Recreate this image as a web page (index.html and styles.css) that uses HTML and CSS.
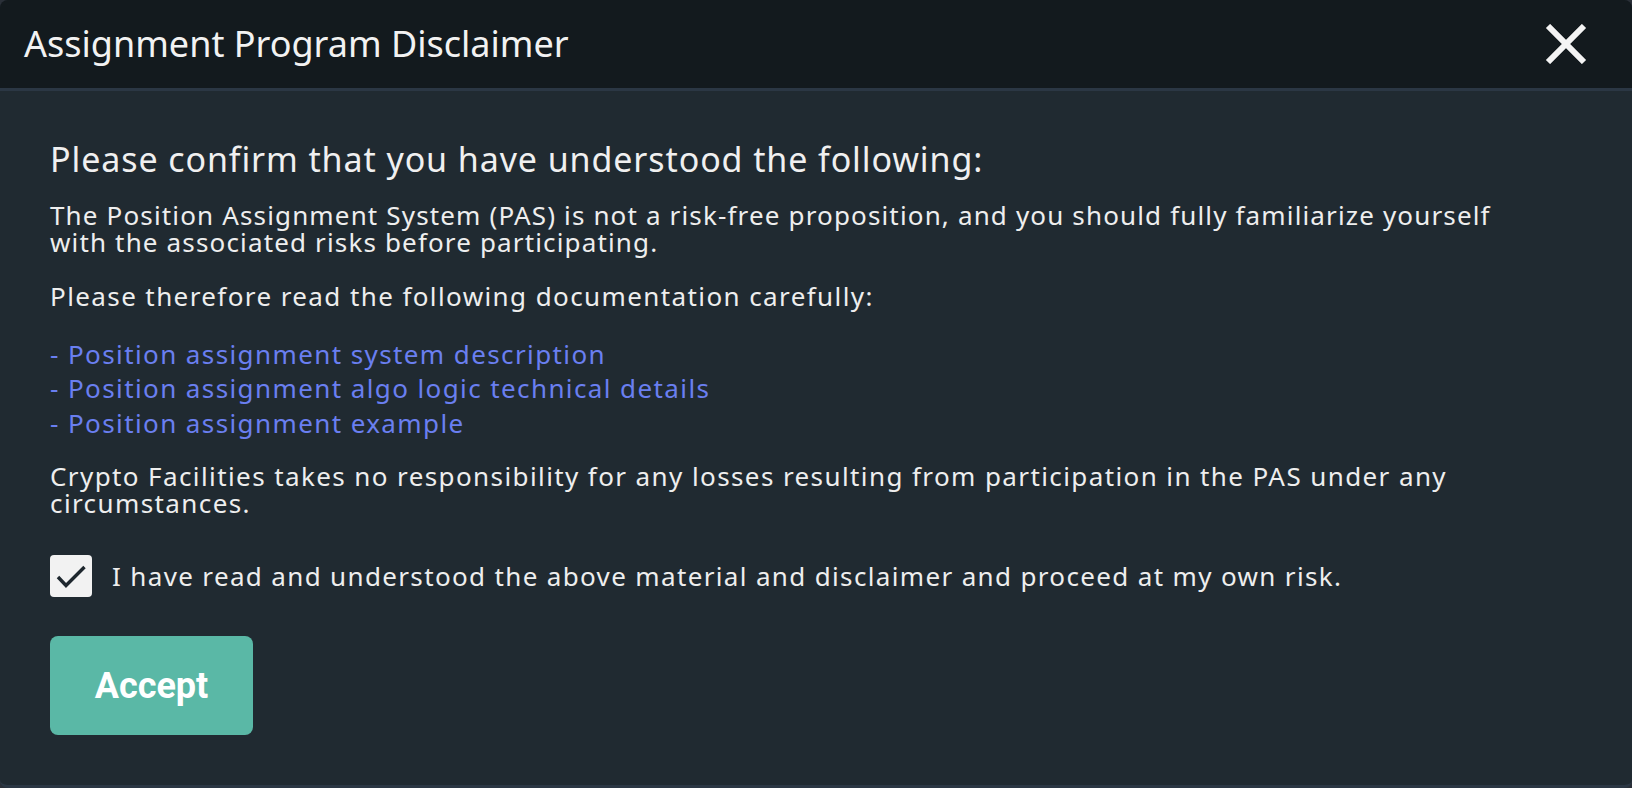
FILE: index.html
```html
<!DOCTYPE html>
<html lang="en">
<head>
<meta charset="utf-8">
<title>Assignment Program Disclaimer</title>
<link rel="stylesheet" href="styles.css">
</head>
<body>
<div class="dialog">
  <div class="header">
    <h1 class="title">Assignment Program Disclaimer</h1>
    <button class="close" aria-label="Close">
      <svg width="42" height="40" viewBox="0 0 42 40"><path d="M3 2 L39 38 M39 2 L3 38" stroke="#f4f4f4" stroke-width="6" fill="none"/></svg>
    </button>
  </div>
  <div class="content">
    <h2 class="heading">Please confirm that you have understood the following:</h2>
    <p class="para first">The Position Assignment System (PAS) is not a risk-free proposition, and you should fully familiarize yourself<br>with the associated risks before participating.</p>
    <p class="para gap28">Please therefore read the following documentation carefully:</p>
    <ul class="links">
      <li><a href="#">- Position assignment system description</a></li>
      <li><a href="#">- Position assignment algo logic technical details</a></li>
      <li><a href="#">- Position assignment example</a></li>
    </ul>
    <p class="para after-links">Crypto Facilities takes no responsibility for any losses resulting from participation in the PAS under any<br>circumstances.</p>
    <label class="check-row">
      <span class="checkbox">
        <svg width="42" height="42" viewBox="0 0 42 42"><path d="M8 22 L16 30.5 L34.5 12" stroke="#1e272e" stroke-width="3.4" fill="none"/></svg>
      </span>
      <span class="check-label">I have read and understood the above material and disclaimer and proceed at my own risk.</span>
    </label>
    <button class="accept">Accept</button>
  </div>
</div>
</body>
</html>
```
FILE: styles.css
```css
html, body {
  margin: 0;
  padding: 0;
}
body {
  background: #2a3038;
  width: 1632px;
  height: 788px;
  overflow: hidden;
  font-family: "Noto Sans", "Open Sans", sans-serif;
  color: #eeeeee;
}
.dialog {
  box-sizing: border-box;
  width: 1632px;
  height: 788px;
  background: #202a31;
  border-radius: 8px;
  border-bottom: 3px solid #2b3744;
  overflow: hidden;
}
.header {
  box-sizing: border-box;
  height: 91px;
  background: #131a1e;
  border-bottom: 3px solid #2b3744;
  display: flex;
  align-items: center;
  justify-content: space-between;
  padding: 0 45px 0 24px;
}
.title {
  margin: 0;
  font-size: 36px;
  font-weight: 400;
  color: #f2f2f2;
  line-height: 40px;
}
.close {
  border: 0;
  background: none;
  padding: 0;
  width: 42px;
  height: 40px;
  display: flex;
}
.content {
  padding: 48px 50px 0 50px;
}
.heading {
  margin: 0;
  font-size: 34px;
  font-weight: 400;
  line-height: 40px;
  letter-spacing: 0.9px;
  color: #f0f0f0;
}
.para {
  margin: 0;
  font-size: 26px;
  line-height: 26.6px;
  letter-spacing: 1.4px;
}
.para.first {
  margin-top: 23px;
  letter-spacing: 1.15px;
}
.para.gap28 {
  margin-top: 28px;
}
.links {
  list-style: none;
  margin: 27px 0 0 0;
  padding: 0;
  font-size: 26px;
  line-height: 34.5px;
  letter-spacing: 1.4px;
}
.links a {
  color: #6a7ff0;
  text-decoration: none;
}
.para.after-links {
  margin-top: 23px;
}
.check-row {
  margin-top: 39px;
  display: flex;
  align-items: center;
  gap: 20px;
}
.checkbox {
  width: 42px;
  height: 42px;
  background: #f2f2f2;
  border-radius: 4px;
  display: flex;
}
.check-label {
  font-size: 26px;
  line-height: 26.6px;
  letter-spacing: 1.35px;
}
.accept {
  display: block;
  margin-top: 39px;
  width: 203px;
  height: 99px;
  border: 0;
  border-radius: 8px;
  background: #5ab8a6;
  color: #ffffff;
  font-family: Roboto, "Liberation Sans", sans-serif;
  font-weight: 700;
  font-size: 36px;
  padding: 0;
}
```
